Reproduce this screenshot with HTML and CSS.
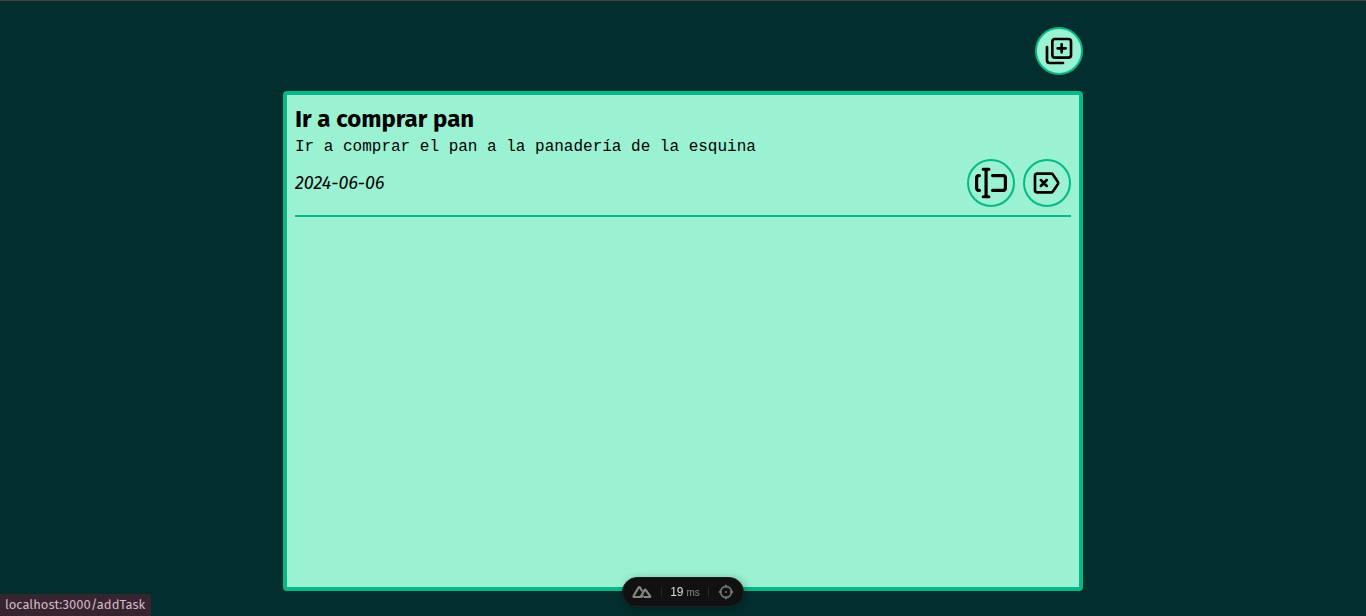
FILE: index.html
```html
<!DOCTYPE html>
<html lang="es">
<head>
<meta charset="utf-8">
<title>Tareas</title>
<link rel="stylesheet" href="styles.css">
</head>
<body>
<div class="page">
  <header class="toolbar">
    <a class="round-button filled" href="/addTask" aria-label="Añadir tarea">
      <svg class="icon" viewBox="0 0 24 24"><rect x="7" y="3" width="14" height="14" rx="2"/><path d="M3 9v10a2 2 0 0 0 2 2h10M14 7v6M11 10h6"/></svg>
    </a>
  </header>
  <main class="board">
    <article class="task">
      <h2 class="task-title">Ir a comprar pan</h2>
      <p class="task-text">Ir a comprar el pan a la panadería de la esquina</p>
      <div class="task-footer">
        <time class="task-date" datetime="2024-06-06">2024-06-06</time>
        <div class="task-actions">
          <button class="round-button" type="button" aria-label="Editar">
            <svg class="icon heavy" viewBox="0 0 24 24"><path d="M3.3 6.4H3a1.800 1.800 0 0 0-1.800 1.800v7.600A1.800 1.800 0 0 0 3 17.600h.3M13.200 6.400H21a1.800 1.800 0 0 1 1.800 1.800v7.600a1.800 1.800 0 0 1-1.800 1.800h-7.800M8.300 1.700v20.600M6.200 1.700h4.200M6.200 22.300h4.200"/></svg>
          </button>
          <button class="round-button" type="button" aria-label="Eliminar">
            <svg class="icon" viewBox="0 0 24 24"><path d="M4.500 5h10.600q.8 0 1.300.7l3.700 5.300q.7 1 0 2l-3.700 5.300q-.5.7-1.300.7H4.500A1.500 1.500 0 0 1 3 17.500v-11A1.500 1.500 0 0 1 4.500 5zM7.400 9.800l4.400 4.400M11.800 9.800l-4.400 4.400"/></svg>
          </button>
        </div>
      </div>
    </article>
  </main>
</div>
<div class="devtools">
  <button class="dev-button" type="button" aria-label="Nuxt DevTools">
    <svg class="dev-logo" viewBox="0 0 20 14"><path d="M8.500 12H2.400q-1.300 0-.7-1.200L6.600 2.500q.7-1 1.400 0l2.200 3.800M8.500 12l4-6.800q.6-1 1.300 0l4.300 6q.6.8-.6.8h-5.600M8.500 12q2.200 0 3-1.500"/></svg>
  </button>
  <span class="dev-divider"></span>
  <span class="dev-time">19<small class="dev-unit">ms</small></span>
  <span class="dev-divider"></span>
  <button class="dev-button" type="button" aria-label="Inspeccionar">
    <svg class="dev-target" viewBox="0 0 16 16"><circle cx="8" cy="8" r="5.5"/><path d="M8 .8v3M8 12.200v3M.8 8h3M12.200 8h3"/><circle class="dot" cx="8" cy="8" r="1"/></svg>
  </button>
</div>
<div class="link-status">localhost:3000/addTask</div>
</body>
</html>
```
FILE: styles.css
```css
* { box-sizing: border-box; }

body {
  margin: 0;
  background: #022f2e;
  color: #000;
  font-family: "Fira Sans", "Noto Sans", sans-serif;
}

.page {
  display: flex;
  flex-direction: column;
  align-items: center;
  gap: 16px;
  min-height: 100vh;
  padding: 26px 16px 25px;
  border-top: 1px solid #49424a;
}

.toolbar {
  display: flex;
  justify-content: flex-end;
  width: 100%;
  max-width: 800px;
}

.board {
  flex: 1;
  width: 100%;
  max-width: 800px;
  padding: 8px;
  border: 4px solid #05b886;
  border-radius: 4px;
  background: #9af2d2;
}

.task {
  padding-bottom: 8px;
  border-bottom: 2px solid #05b886;
}

.task-title {
  margin: 0;
  font-family: "Fira Sans", Roboto, sans-serif;
  font-size: 24px;
  line-height: 32px;
  font-weight: 700;
}

.task-text {
  margin: 0;
  font-family: "Liberation Mono", monospace;
  font-size: 16px;
  line-height: 24px;
}

.task-footer,
.task-actions {
  display: flex;
  align-items: center;
  gap: 8px;
}

.task-footer { justify-content: space-between; }

.task-date {
  font-size: 18px;
  font-style: italic;
}

.round-button {
  display: flex;
  align-items: center;
  justify-content: center;
  width: 48px;
  height: 48px;
  padding: 0;
  border: 2px solid #05b886;
  border-radius: 50%;
  background: none;
  color: #000;
  cursor: pointer;
}

.filled { background: #9af2d2; }

.icon {
  width: 32px;
  height: 32px;
  flex: none;
  fill: none;
  stroke: currentColor;
  stroke-width: 2;
  stroke-linecap: round;
  stroke-linejoin: round;
}

.heavy { stroke-width: 2.4; }

.devtools {
  position: fixed;
  bottom: 9px;
  left: 50%;
  transform: translateX(-50%);
  display: flex;
  align-items: center;
  justify-content: space-between;
  width: 122px;
  height: 30px;
  padding: 0 9px;
  border: 1px solid #1c2020;
  border-radius: 15px;
  background: #111;
  box-shadow: 2px 2px 8px rgba(0, 0, 0, 0.3);
  color: #ddd;
}

.dev-button {
  display: flex;
  padding: 0;
  border: 0;
  background: none;
  color: #858585;
}

.dev-logo,
.dev-target {
  fill: none;
  stroke: currentColor;
  stroke-linejoin: round;
}

.dev-logo {
  width: 20px;
  height: 14px;
  stroke-width: 2.2;
}

.dev-target {
  width: 16px;
  height: 16px;
  stroke-width: 1.8;
  color: #707070;
}

.dot {
  fill: currentColor;
  stroke: none;
}

.dev-divider {
  width: 1px;
  height: 10px;
  background: #282828;
}

.dev-time {
  display: flex;
  align-items: center;
  gap: 3px;
  font-family: "Liberation Sans", Arial, sans-serif;
  font-size: 12px;
}

.dev-unit {
  color: #888;
  font-size: 10px;
}

.link-status {
  position: fixed;
  left: 0;
  bottom: 0;
  height: 22px;
  padding: 0 6px 0 5px;
  border-top-right-radius: 4px;
  background: #36242f;
  color: #d5b9cb;
  font-size: 13px;
  line-height: 21px;
}
```
